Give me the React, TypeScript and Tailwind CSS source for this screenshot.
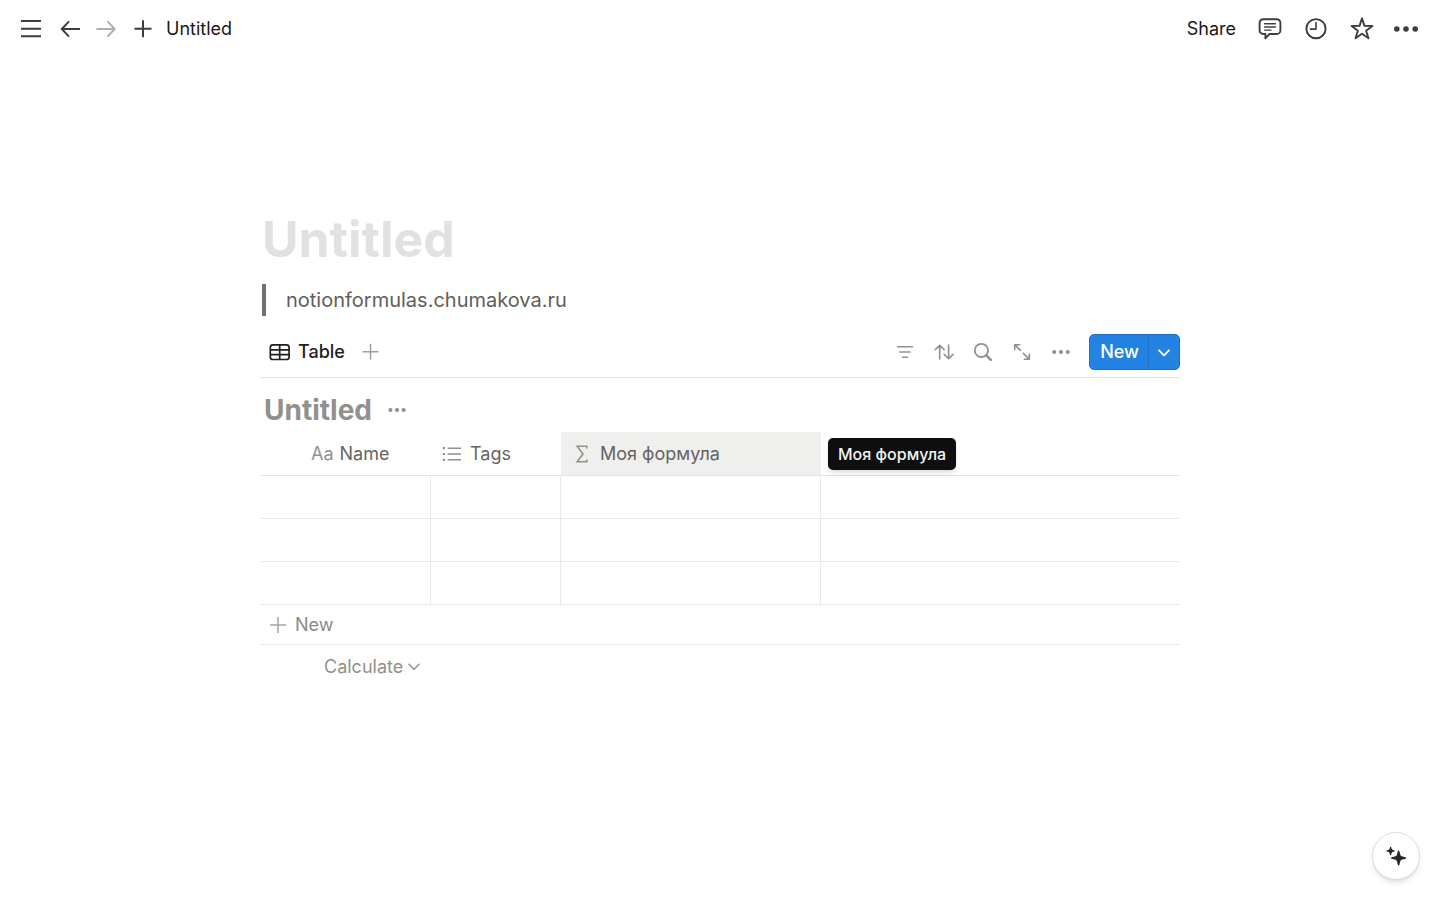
import type { ReactNode } from "react";

const rows = [1, 2, 3];

function Icon({
  w,
  h,
  sw = 2,
  children,
}: {
  w: number;
  h: number;
  sw?: number;
  children: ReactNode;
}) {
  return (
    <svg
      width={w}
      height={h}
      viewBox={`0 0 ${w} ${h}`}
      fill="none"
      stroke="currentColor"
      strokeWidth={sw}
      aria-hidden="true"
      className="shrink-0"
    >
      {children}
    </svg>
  );
}

function Dots({ w, h, r, gap }: { w: number; h: number; r: number; gap: number }) {
  return (
    <svg
      width={w}
      height={h}
      viewBox={`0 0 ${w} ${h}`}
      fill="currentColor"
      aria-hidden="true"
      className="shrink-0"
    >
      <circle cx={w / 2 - gap} cy={h / 2} r={r} />
      <circle cx={w / 2} cy={h / 2} r={r} />
      <circle cx={w / 2 + gap} cy={h / 2} r={r} />
    </svg>
  );
}

function TopButton({
  label,
  className,
  children,
}: {
  label: string;
  className: string;
  children: ReactNode;
}) {
  return (
    <button
      type="button"
      aria-label={label}
      className={`flex h-9 items-center justify-center ${className}`}
    >
      {children}
    </button>
  );
}

function TopBar() {
  return (
    <header className="flex h-[57px] items-center justify-between pr-[13px] pl-3 text-[#3f3d37]">
      <nav className="flex items-center">
        <TopButton label="Open sidebar" className="w-[38px]">
          <Icon w={22} h={20}>
            <path d="M1 2h20M1 9.7h20M1 17.3h20" />
          </Icon>
        </TopButton>
        <TopButton label="Back" className="w-10">
          <Icon w={20} h={20}>
            <path d="M9 2.4 1.8 10l7.2 7.6M1.8 10H20" />
          </Icon>
        </TopButton>
        <TopButton label="Forward" className="w-8 text-[#afaeac]">
          <Icon w={20} h={20}>
            <path d="M11.5 2.4l7.2 7.6-7.2 7.6M18.700 10H.5" />
          </Icon>
        </TopButton>
        <TopButton label="New page" className="w-10">
          <Icon w={20} h={20}>
            <path d="M2.5 9.7h17M11 1.2v17" />
          </Icon>
        </TopButton>
        <a href="#" className="pl-1 text-lg text-[#191918]">
          Untitled
        </a>
      </nav>
      <div className="flex items-center">
        <button type="button" className="pr-[11px] text-lg text-[#191918]">
          Share
        </button>
        <TopButton label="Comments" className="w-[46px]">
          <Icon w={24} h={24} sw={1.9}>
            <path
              d="M5.2 2.2h13.6a3.6 3.6 0 0 1 3.6 3.6v7.6a3.6 3.6 0 0 1-3.6 3.6h-7.3L7.4 21.4V17H5.2a3.6 3.6 0 0 1-3.6-3.6V5.8a3.6 3.6 0 0 1 3.6-3.6z"
              strokeLinejoin="round"
            />
            <path d="M6.6 6.8h10.8M6.6 10h10.8M6.6 13.1h6.4" strokeWidth={1.4} strokeLinecap="round" />
          </Icon>
        </TopButton>
        <TopButton label="Updates" className="w-[46px]">
          <Icon w={24} h={24} sw={1.9}>
            <circle cx="12" cy="11.7" r="9.6" />
            <path d="M12 5.500v6.600H6.400" strokeWidth={1.6} strokeLinecap="round" strokeLinejoin="round" />
          </Icon>
        </TopButton>
        <TopButton label="Favorite" className="w-[46px]">
          <Icon w={24} h={24} sw={1.9}>
            <path
              d="M12 1.4l2.5 7.5 7.9.1-6.3 4.7 2.4 7.6-6.500-4.600-6.500 4.600 2.400-7.600L1.600 9l7.900-.1z"
              strokeLinejoin="round"
            />
          </Icon>
        </TopButton>
        <TopButton label="More" className="w-[42px]">
          <Dots w={26} h={24} r={2.8} gap={9.2} />
        </TopButton>
      </div>
    </header>
  );
}

function ToolButton({ label, children }: { label: string; children: ReactNode }) {
  return (
    <button
      type="button"
      aria-label={label}
      className="flex h-9 w-[39px] items-center justify-center"
    >
      {children}
    </button>
  );
}

function Toolbar() {
  return (
    <div className="flex items-center justify-between border-b border-[#e3e3e1] pt-2 pb-[7px]">
      <div className="flex items-center pl-[9px]">
        <button
          type="button"
          className="flex items-center gap-2 text-lg font-medium text-[#22211e]"
        >
          <Icon w={21} h={18} sw={1.7}>
            <rect x="1.3" y="1.9" width="18.8" height="14.6" rx="2.6" />
            <path d="M1.3 6.8h18.8M1.3 11.7h18.8M10.7 1.9v14.6" />
          </Icon>
          Table
        </button>
        <button type="button" aria-label="Add view" className="ml-4 text-[#a09f9c]">
          <Icon w={18} h={18} sw={1.5}>
            <path d="M1.5 8.8h16M9.5.8v16" />
          </Icon>
        </button>
      </div>
      <div className="flex items-center text-[#91908d]">
        <ToolButton label="Filter">
          <Icon w={18} h={18} sw={1.6}>
            <path d="M1.5 3.8h15M4 9h10M6.5 14.3h5" strokeLinecap="round" />
          </Icon>
        </ToolButton>
        <ToolButton label="Sort">
          <Icon w={20} h={18} sw={1.6}>
            <path
              d="M5.7 16V2.3M1.3 6.6l4.4-4.4 4.4 4.4M14.6 2v13.7M10.2 11.4l4.4 4.4 4.4-4.4"
              strokeLinecap="round"
              strokeLinejoin="round"
            />
          </Icon>
        </ToolButton>
        <ToolButton label="Search">
          <Icon w={20} h={20} sw={1.8}>
            <circle cx="8.4" cy="8.4" r="6.6" />
            <path d="M13.2 13.2l4.6 4.6" strokeWidth={2.4} strokeLinecap="round" />
          </Icon>
        </ToolButton>
        <ToolButton label="Open as full page">
          <Icon w={18} h={18} sw={1.6}>
            <path
              d="M7.4 7.4 1.9 1.9M1.7 6.6V1.7h5M10.4 10.4l5.7 5.7M16.3 11.4v4.9h-5"
              strokeLinecap="round"
              strokeLinejoin="round"
            />
          </Icon>
        </ToolButton>
        <ToolButton label="View options">
          <Dots w={20} h={18} r={2.1} gap={6.8} />
        </ToolButton>
        <div className="ml-[9px] flex h-9 items-center overflow-hidden rounded-[5px] border border-[#1b72c8] bg-[#2383e2] text-white">
          <button type="button" className="h-full pr-[9px] pl-[10px] text-lg font-medium">
            New
          </button>
          <button
            type="button"
            aria-label="Templates"
            className="flex h-full w-[31px] items-center justify-center border-l border-[#1b72c8]"
          >
            <Icon w={14} h={10} sw={1.8}>
              <path d="M2 3.3l5 5 5-5" strokeLinecap="round" strokeLinejoin="round" />
            </Icon>
          </button>
        </div>
      </div>
    </div>
  );
}

function Database() {
  return (
    <section>
      <Toolbar />
      <div className="flex items-center gap-[15px] pt-[14px] pb-1 pl-1">
        <h2 className="text-[28px] leading-9 font-bold text-[#91908d]">Untitled</h2>
        <button type="button" aria-label="Database options" className="text-[#91908d]">
          <Dots w={20} h={18} r={2.1} gap={6.6} />
        </button>
      </div>
      <table className="w-full table-fixed border-separate border-spacing-0 text-lg text-[#65645f]">
        <colgroup>
          <col className="w-[171px]" />
          <col className="w-[130px]" />
          <col className="w-[260px]" />
          <col />
        </colgroup>
        <thead>
          <tr>
            <th className="h-11 border-b border-[#e3e3e1] p-0 pl-[51px] text-left font-normal">
              <span className="flex items-center gap-1.5">
                <span className="text-[#91908d]">Aa</span>
                Name
              </span>
            </th>
            <th className="h-11 border-b border-[#e3e3e1] p-0 pl-[11px] text-left font-normal">
              <span className="flex items-center gap-2">
                <Icon w={20} h={18} sw={1.5}>
                  <path d="M5.6 3.2H19M5.6 9H19M5.6 14.8H19" stroke="#91908d" />
                  <path d="M.8 3.2H3M.8 9H3M.8 14.8H3" stroke="#91908d" strokeWidth={2.2} />
                </Icon>
                Tags
              </span>
            </th>
            <th className="relative h-11 border-b border-[#e3e3e1] bg-[#efefee] p-0 pl-[11px] text-left font-normal">
              <span className="flex items-center gap-2">
                <Icon w={20} h={20} sw={1.6}>
                  <path d="M14.8 4.4V2.3H5.2l5.8 7.7-5.8 7.7h9.6v-2.1" stroke="#91908d" />
                </Icon>
                Моя формула
              </span>
              <span
                role="tooltip"
                className="absolute top-1/2 left-full ml-[7px] -translate-y-1/2 rounded-[5px] bg-[#0f0f0f] px-[10px] py-1.5 text-base leading-5 font-medium whitespace-nowrap text-[#f3f3f3] shadow-md"
              >
                Моя формула
              </span>
            </th>
            <th className="h-11 border-b border-[#e3e3e1] p-0" />
          </tr>
        </thead>
        <tbody>
          {rows.map((row) => (
            <tr key={row}>
              <td className="h-[43px] border-r border-b border-[#e9e9e7] p-0" />
              <td className="h-[43px] border-r border-b border-[#e9e9e7] p-0" />
              <td className="h-[43px] border-r border-b border-[#e9e9e7] p-0" />
              <td className="h-[43px] border-b border-[#e9e9e7] p-0" />
            </tr>
          ))}
        </tbody>
      </table>
      <button
        type="button"
        className="flex h-10 w-full items-center gap-2 border-b border-[#e9e9e7] pl-[9px] text-lg text-[#8a8986]"
      >
        <Icon w={18} h={18} sw={1.5}>
          <path d="M1 9h16M9 1v16" stroke="#a5a4a1" />
        </Icon>
        New
      </button>
      <button
        type="button"
        className="flex h-[43px] items-center gap-1 pl-16 text-lg text-[#91908d]"
      >
        Calculate
        <Icon w={14} h={10} sw={1.5}>
          <path d="M2 2.3l5 5 5-5" strokeLinecap="round" strokeLinejoin="round" />
        </Icon>
      </button>
    </section>
  );
}

export default function App() {
  return (
    <div className="min-h-screen bg-white font-['Inter','Liberation_Sans',sans-serif]">
      <TopBar />
      <main className="mx-auto max-w-[920px] pt-[151px]">
        <h1 className="pl-[2px] text-[50px] leading-[62px] font-bold text-[#e1e1df]">Untitled</h1>
        <blockquote className="mt-[14px] mb-[10px] ml-[2px] border-l-4 border-[#72706c] pl-5 text-xl leading-8 text-[#5f5e59]">
          notionformulas.chumakova.ru
        </blockquote>
        <Database />
      </main>
      <button
        type="button"
        aria-label="Ask AI"
        className="fixed right-5 bottom-5 flex size-12 items-center justify-center rounded-full border border-[#dcdcdb] bg-white text-[#262624] shadow-md"
      >
        <svg width="24" height="24" viewBox="0 0 24 24" fill="currentColor" aria-hidden="true">
          <path d="M14.6 6.4q.5 0 .7.7l1.1 3.8q.3 1 1.300 1.300l3.800 1.100q.7.2.7.7t-.7.7l-3.800 1.100q-1 .3-1.300 1.300l-1.100 3.800q-.2.700-.7.700t-.7-.7l-1.100-3.800q-.3-1-1.300-1.300l-3.800-1.100q-.7-.2-.7-.7t.7-.7l3.800-1.100q1-.3 1.300-1.300l1.100-3.800q.2-.7.7-.7z" />
          <path d="M6.6 2.600q.3 0 .5.500l.6 1.800q.2.700.9.900l1.800.6q.5.200.5.500t-.5.500l-1.800.6q-.7.200-.9.900l-.6 1.800q-.2.500-.5.500t-.5-.5l-.6-1.800q-.2-.7-.9-.9l-1.800-.6q-.5-.2-.5-.5t.5-.5l1.800-.6q.7-.2.9-.9l.6-1.800q.2-.5.5-.5z" />
        </svg>
      </button>
    </div>
  );
}
